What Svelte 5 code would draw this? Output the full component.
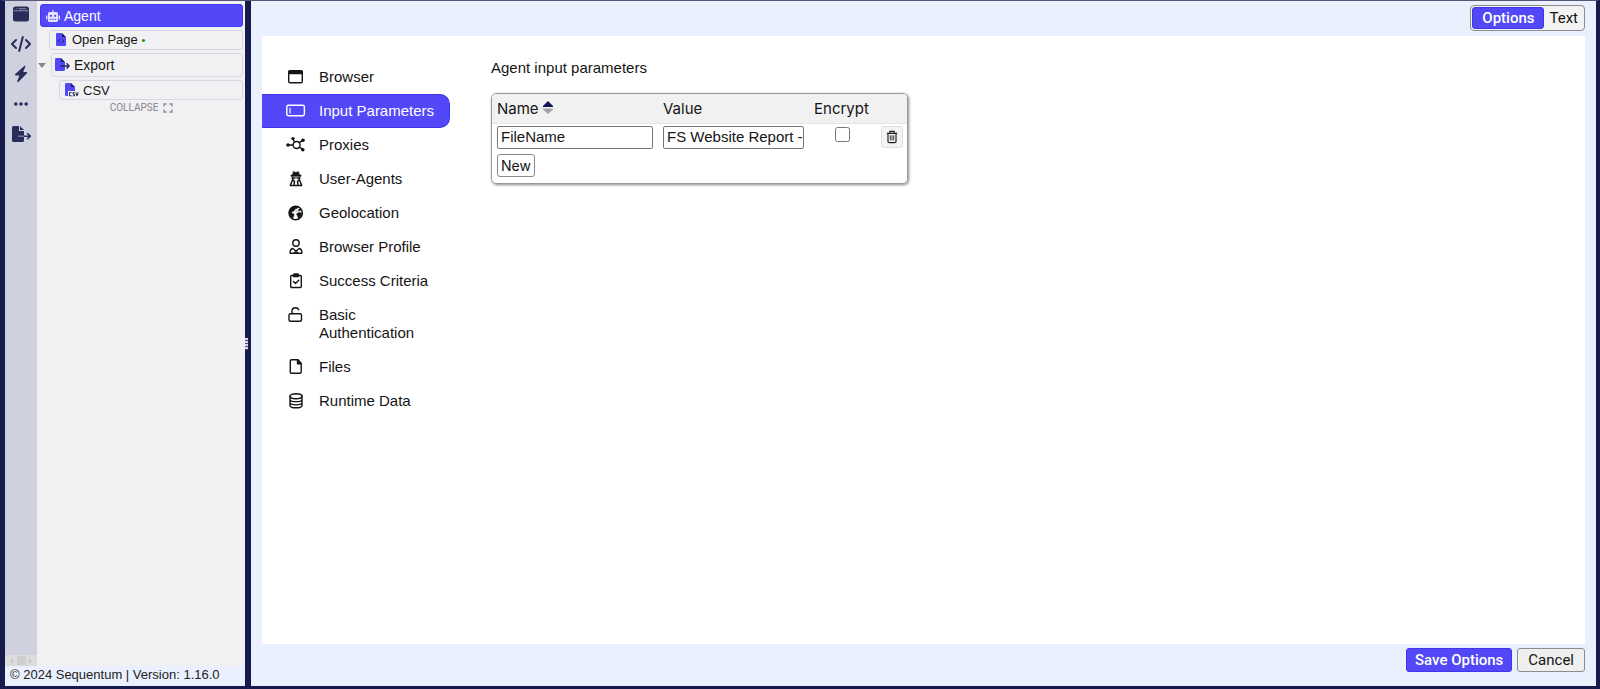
<script>
  let filename = $state('FileName');
  let value = $state('FS Website Report - ');
  let encrypt = $state(false);
  const nav = [
    ['browser', 'Browser'],
    ['input', 'Input Parameters'],
    ['proxies', 'Proxies'],
    ['agents', 'User-Agents'],
    ['geo', 'Geolocation'],
    ['profile', 'Browser Profile'],
    ['success', 'Success Criteria'],
    ['lock', 'Basic Authentication'],
    ['file', 'Files'],
    ['data', 'Runtime Data']
  ];
  const rail = ['window', 'code', 'bolt', 'dots', 'export'];
  const railLabels = ['Browser', 'Code', 'Actions', 'More', 'Export'];
</script>

{#snippet icon(name)}
  {#if name === 'window'}
    <svg width="18" height="18" viewBox="0 0 18 18"><rect x="1" y="1.5" width="16" height="15" rx="2.5" fill="#2a2c5a" /><path d="M1.500 5.800h15" stroke="#8f92ad" stroke-width="1" /><path d="M4 3.800h.8M6.500 3.800h8" stroke="#8f92ad" stroke-width="1" /></svg>
  {:else if name === 'code'}
    <svg width="22" height="18" viewBox="0 0 22 18" fill="none" stroke="#2a2c5a" stroke-width="2" stroke-linecap="round" stroke-linejoin="round"><path d="M6 5L2 9l4 4M16 5l4 4-4 4M12.800 2L9.200 16" /></svg>
  {:else if name === 'bolt'}
    <svg width="18" height="18" viewBox="0 0 18 18" fill="#2a2c5a"><path d="M12.200.9c.8-.3 1.400.3 1 1.100L11.200 7h3c.9 0 1.200.9.600 1.500L6.600 16.800c-.8.700-1.700.100-1.300-.9L7.400 10.600H3.800c-.9 0-1.200-.9-.5-1.500z" /></svg>
  {:else if name === 'dots'}
    <svg width="18" height="18" viewBox="0 0 18 18" fill="#2a2c5a"><circle cx="3.800" cy="9" r="1.800" /><circle cx="9" cy="9" r="1.800" /><circle cx="14.200" cy="9" r="1.800" /></svg>
  {:else if name === 'export'}
    <svg width="20" height="18" viewBox="0 0 20 18"><path d="M1 2.500Q1 1 2.500 1H8v5h5v9.500q0 1.500-1.500 1.500h-9Q1 17 1 15.500z" fill="#2a2c5a" /><path d="M9 1l4 4H9z" fill="#2a2c5a" /><path d="M7 11.200h6" stroke="#878aa8" stroke-width="1.200" /><path d="M13 11.200h6M16.200 8.200l3 3-3 3" fill="none" stroke="#2a2c5a" stroke-width="1.600" /></svg>
  {:else if name === 'robot'}
    <svg width="14" height="14" viewBox="0 0 14 14"><path d="M6.400 1h1.200v2h2.900Q12 3 12 4.500v7q0 1.500-1.500 1.500h-7Q2 13 2 11.500v-7Q2 3 3.500 3h2.900zM.4 6.500h1v4h-1q-.4 0-.4-.6V7.100q0-.6.400-.6zM13.600 6.500h-1v4h1q.4 0 .4-.6V7.100q0-.6-.4-.6z" fill="#e4e2ff" /><circle cx="4.900" cy="6.800" r="1.100" fill="#5248f8" /><circle cx="9.100" cy="6.800" r="1.100" fill="#5248f8" /><path d="M3.800 10.300h6.400" stroke="#5248f8" stroke-dasharray="1.600 .8" /></svg>
  {:else if name === 'page'}
    <svg width="10" height="13" viewBox="0 0 10 13"><path d="M0 1q0-1 1-1h5v4h4v8q0 1-1 1H1q-1 0-1-1z" fill="#5248f8" /><path d="M6 0l4 4H6z" fill="#1b1b5c" /><path d="M4 6L2.200 8 4 10M6 6l1.800 2L6 10" fill="none" stroke="#2c2692" /></svg>
  {:else if name === 'exportsmall'}
    <svg width="15" height="14" viewBox="0 0 15 14"><path d="M0 1.200Q0 0 1.200 0H6v4h4v7.800Q10 13 8.800 13H1.200Q0 13 0 11.800z" fill="#5248f8" /><path d="M6 0l4 4H6z" fill="#1b1b5c" /><path d="M5.500 8h8.500M11.500 5.300L14.200 8l-2.700 2.700" fill="none" stroke="#23245a" stroke-width="1.300" /></svg>
  {:else if name === 'csv'}
    <svg width="14" height="14" viewBox="0 0 14 14"><path d="M0 1.200Q0 0 1.200 0H6v4h4v4H3v5H1.200Q0 13 0 11.800z" fill="#5248f8" /><path d="M6 0l4 4H6z" fill="#1b1b5c" /><path d="M6.500 9.500H4.500v3.300h2M9.500 9.500H8v1.600h1.500v1.700H7.700M10.800 9.200l1.200 3.700 1.200-3.700" fill="none" stroke="#23245a" /></svg>
  {:else}
    <svg width="20" height="18" viewBox="0 0 20 18" fill="none" stroke="currentColor" stroke-width="1.400" stroke-linecap="round" stroke-linejoin="round">
      {#if name === 'browser'}
        <rect x="2.700" y="2.700" width="13.600" height="12" rx="1.300" /><path d="M2.700 3.500h13.600v2H2.700z" fill="currentColor" />
      {:else if name === 'input'}
        <rect x=".8" y="3.300" width="17.600" height="10.400" rx="1.600" /><path d="M4 6v5" stroke-width="1.200" />
      {:else if name === 'proxies'}
        <circle cx="10.600" cy="9" r="3.500" /><path d="M2 9h5M8.500 6L7 3M13.200 6.700L16 4.800M13.300 11.200l3 2" /><g fill="currentColor" stroke="none"><circle cx="2" cy="9" r="1.800" /><circle cx="7" cy="2.600" r="1.700" /><circle cx="17" cy="4.200" r="1.800" /><circle cx="16.800" cy="13.800" r="1.800" /></g>
      {:else if name === 'agents'}
        <path d="M7.600 1.800q2.400 1.400 4.800 0L13.500 5H15v1.200H5V5h1.500z" fill="currentColor" stroke-width=".8" /><path d="M6.200 7.500q.3 2.500 2 3.500M13.800 7.500q-.3 2.500-2 3.500M6.500 10l-2.200 5.500h11.400L13.500 10M8.500 11.500L8 15M11.500 11.500l.5 3.500" stroke-width="1.500" /><path d="M7 8h2M11 8h2" stroke-width="1.600" />
      {:else if name === 'geo'}
        <circle cx="9.700" cy="9" r="6.700" /><path d="M3.500 6.500Q5 3 9 2.500l3 .5-1 1.500-2 .5-1 2-2 .5-.5 1.500 2.500 1-.3 2.500L6.500 14Q3 12 3.300 9zM10.500 10l2-1.500 3.500.5-1 3.500-2.500 2-1-2.500zM12.500 5.500l1.500-.7 1 1.700-2 .5zM10 7.200h1" fill="currentColor" stroke-width=".5" />
      {:else if name === 'profile'}
        <circle cx="10" cy="5" r="3.200" /><path d="M4.200 15.300q-.4-4.300 2.600-4.800L10 13l3.200-2.500q3 .5 2.600 4.800zM10 13l-2 2M10 13l2 2" />
      {:else if name === 'success'}
        <rect x="4.700" y="3.500" width="10.600" height="12" rx="1" /><path d="M7.500 3q0-1 1-1h3q1 0 1 1v1.500h-5z" fill="currentColor" /><path d="M7.500 9.500l2 2 3.300-3.300" />
      {:else if name === 'lock'}
        <rect x="3" y="7.800" width="12.500" height="7.500" rx="1.500" /><path d="M6 7.500V5Q6 1.800 9.500 1.800q2.500 0 3.200 2" />
      {:else if name === 'file'}
        <path d="M4.300 3q0-1.300 1.300-1.300H12l3.200 3.800V14q0 1.300-1.300 1.300H5.600q-1.300 0-1.300-1.300z" /><path d="M11.500 1.700v4h3.700z" fill="currentColor" />
      {:else if name === 'data'}
        <ellipse cx="10" cy="4.200" rx="6" ry="2.500" /><path d="M4 4.200v9.200c0 3.200 12 3.200 12 0V4.200M4 7.400c0 3 12 3 12 0M4 10.600c0 3 12 3 12 0" />
      {/if}
    </svg>
  {/if}
{/snippet}

<div class="app">
  <aside>
    <div class="side">
      <div class="rail">
        {#each rail as r, i}
          <button aria-label={railLabels[i]}>{@render icon(r)}</button>
        {/each}
        <div class="scroll"><span class="left"></span><i></i><span class="right"></span></div>
      </div>
      <div class="tree">
        <button class="node agent">{@render icon('robot')}Agent</button>
        <button class="node open">{@render icon('page')}<span>Open Page <b>•</b></span></button>
        <div class="branch">
          <span class="caret"></span>
          <button class="node export">{@render icon('exportsmall')}Export</button>
        </div>
        <button class="node csv">{@render icon('csv')}CSV</button>
        <button class="collapse">COLLAPSE
          <svg width="10" height="10" viewBox="0 0 10 10" fill="none" stroke="#8a8a8e" stroke-width="1.300"><path d="M1 3.500V1h2.500M6.500 1H9v2.500M9 6.500V9H6.500M3.500 9H1V6.500" /></svg>
        </button>
      </div>
    </div>
    <footer>© 2024 Sequentum | Version: 1.16.0</footer>
  </aside>
  <div class="divider"><span></span></div>
  <main>
    <div class="top">
      <div class="switch"><button class="on">Options</button><button>Text</button></div>
    </div>
    <div class="panel">
      <nav>
        {#each nav as [id, label]}
          <a href="#{id}" class:active={id === 'input'}>{@render icon(id)}<span>{label}</span></a>
        {/each}
      </nav>
      <section>
        <p>Agent input parameters</p>
        <div class="box">
          <table>
            <thead>
              <tr>
                <th class="cname">Name <svg width="10" height="13" viewBox="0 0 10 13"><path d="M5 0l5 5v1H0V5z" fill="#14145a" /><path d="M5 13l5-4.500v-1H0v1z" fill="#a5a5a8" /></svg></th>
                <th class="cvalue">Value</th>
                <th class="cenc">Encrypt</th>
                <th class="cdel"></th>
              </tr>
            </thead>
            <tbody>
              <tr>
                <td><input type="text" aria-label="Name" bind:value={filename} /></td>
                <td><input type="text" aria-label="Value" bind:value={value} /></td>
                <td class="check"><input type="checkbox" aria-label="Encrypt" bind:checked={encrypt} /></td>
                <td class="del">
                  <button class="trash" aria-label="Delete"><svg width="12" height="14" viewBox="0 0 14 16" fill="none" stroke="#222" stroke-width="1.400"><path d="M1 3.700h12M4.500 3.500V1.500h5v2M2.300 4v9q0 1.500 1.500 1.500h6.400q1.500 0 1.500-1.500V4" /><path d="M5 6v6M7 6v6M9 6v6" stroke-width="1" /></svg></button>
                </td>
              </tr>
            </tbody>
          </table>
          <button class="new">New</button>
        </div>
      </section>
    </div>
    <div class="actions"><button class="save">Save Options</button><button class="cancel">Cancel</button></div>
  </main>
</div>

<style>
  :global(body) { margin: 0; }
  * { box-sizing: border-box; }
  button { font: inherit; color: inherit; margin: 0; padding: 0; border: 0; background: none; cursor: pointer; }
  svg { display: block; flex: none; }
  .app { display: flex; height: 100vh; border: solid #171a4d; border-width: 1px 4px 3px 5px; border-top-color: #55567a; background: #171a4d; font: 15px "Liberation Sans", Arial, sans-serif; color: #151515; }
  aside { width: 240px; flex: none; display: flex; flex-direction: column; background: #f1f1f4; }
  .side { flex: 1; display: flex; min-height: 0; }
  .rail { width: 32px; flex: none; display: flex; flex-direction: column; align-items: center; background: #cfd2de; padding-top: 4px; gap: 12px; }
  .rail button { display: grid; place-items: center; height: 18px; }
  .scroll { margin-top: auto; width: 100%; height: 11px; display: flex; align-items: center; justify-content: space-between; padding: 0 5px; background: #dcdcdc; }
  .scroll i { width: 9px; height: 9px; background: #cfcfcf; }
  .scroll span { border: 3px solid transparent; }
  .scroll .left { border-right-color: #c8c8c8; border-left-width: 0; }
  .scroll .right { border-left-color: #c8c8c8; border-right-width: 0; }
  .tree { flex: 1; display: flex; flex-direction: column; padding: 3px 2px 0 3px; }
  .node { display: flex; align-items: center; gap: 7px; border: 1px solid #d7d7e2; border-radius: 3px; padding-left: 5px; height: 20px; font-size: 13px; text-align: left; }
  .agent { height: 23px; font-size: 14px; gap: 4px; color: #fff; background: #5248f8; border-color: #4038e8; }
  .open { margin: 3px 0 0 9px; padding: 0 0 1px 6px; gap: 6px; }
  .open b { color: #118a11; font-weight: 400; font-size: 11px; }
  .branch { display: flex; align-items: center; margin-top: 3px; gap: 5px; }
  .caret { border: 4px solid transparent; border-top: 5px solid #88888c; border-bottom: 0; margin-left: -2px; }
  .export { flex: 1; height: 24px; font-size: 14px; gap: 4px; padding: 0 0 1px 3px; }
  .csv { margin: 3px 0 0 19px; gap: 4px; }
  .collapse { display: flex; align-items: center; justify-content: center; gap: 5px; font: 10px Roboto, sans-serif; color: #85858a; height: 15px; }
  footer { height: 20px; background: #eaf0fd; font-size: 13px; line-height: 18px; padding-left: 5px; color: #222; }
  .divider { width: 6px; flex: none; display: flex; align-items: center; }
  .divider span { width: 3px; height: 12px; background: repeating-linear-gradient(#d5d6e6 0 2px, #44467c 2px 3px); }
  main { flex: 1; min-width: 0; background: #eaf0fd; display: flex; flex-direction: column; padding: 4px 11px 14px; }
  .top { display: flex; justify-content: flex-end; height: 31px; font-family: Roboto, sans-serif; }
  .switch { display: flex; height: 26px; padding: 1px; border: 1px solid #8c8c8c; border-radius: 4px; background: #f3f3f3; }
  .switch button { padding: 0 5px; }
  .switch .on { padding: 0 9px; background: #5248f8; color: #fff; border: 1px solid #4038e8; border-radius: 3px; font-weight: 500; }
  .panel { flex: 1; background: #fff; display: flex; min-height: 0; }
  nav { width: 188px; flex: none; padding-top: 24px; }
  nav a { display: flex; gap: 13px; padding: 7px 14px 7px 24px; border: 1px solid transparent; border-left: 0; color: #151515; text-decoration: none; line-height: 18px; }
  nav a.active { background: #5248f8; color: #fff; border-color: #3f35ec; border-radius: 0 10px 10px 0; }
  section { padding: 23px 0 0 41px; }
  p { margin: 0; line-height: 18px; }
  .box { width: 417px; margin-top: 16px; border: 1px solid #9a9a9e; border-radius: 5px; box-shadow: 1px 1px 3px #888; overflow: hidden; padding-bottom: 6px; }
  table { width: 100%; border-collapse: collapse; table-layout: fixed; }
  th { height: 29px; padding: 0 5px; background: #f1f1f2; border-bottom: 1px solid #e4e4e6; font: 15px Inter, sans-serif; text-align: left; white-space: nowrap; }
  th svg { display: inline-block; }
  .cname { width: 166px; }
  .cvalue { width: 151px; }
  .cenc { width: 67px; }
  td { padding: 2px 5px; height: 29px; vertical-align: top; }
  input[type='text'] { display: block; width: 100%; height: 23px; border: 1px solid #777; border-radius: 2px; padding: 0 0 1px 3px; font: inherit; color: inherit; background: #fff; }
  .check input { display: block; width: 15px; height: 15px; margin: 1px auto 0; }
  .trash { display: grid; place-items: center; width: 22px; height: 22px; border: 1px solid #e0e0e0; border-radius: 3px; background: #f3f3f3; }
  .new { display: block; margin: 2px 0 0 5px; width: 38px; height: 23px; border: 1px solid #8a8a8a; border-radius: 3px; background: #fff; font: 14px Inter, sans-serif; }
  .actions { display: flex; justify-content: flex-end; gap: 5px; padding-top: 4px; font-family: Roboto, sans-serif; }
  .actions button { height: 24px; padding: 0 10px; border: 1px solid #8c8c8c; border-radius: 3px; background: #efefef; }
  .actions .save { padding: 0 8px; color: #fff; background: #5248f8; border-color: #4038e8; font-weight: 500; }
</style>
